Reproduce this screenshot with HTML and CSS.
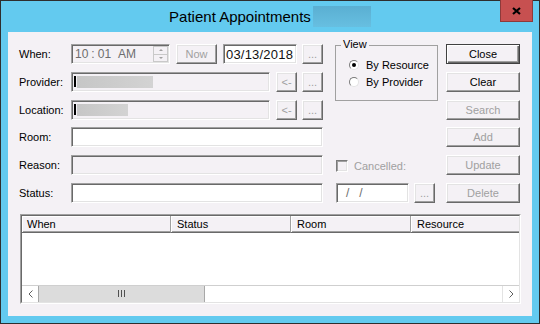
FILE: index.html
```html
<!DOCTYPE html>
<html lang="en">
  <head>
    <meta charset="UTF-8"/>
    <title>Patient Appointments</title>
    <link rel="stylesheet" href="styles.css">
  </head>
  <body>
    <div class="window">
      <div class="titlebar">
        <span class="title">Patient Appointments</span><span class="title-redact"></span>
        <button class="close-btn" title="Close">
          <svg width="9" height="8" viewBox="0 0 9 8"><path d="M1 1 L8 7 M8 1 L1 7" stroke="#000" stroke-width="2.2" fill="none"/></svg>
        </button>
      </div>

      <div class="client">
        <div class="top">
          <div class="form">
            <div class="row">
              <label class="lbl">When:</label>
              <div class="field off time">
                <span>10</span><span class="sep">:</span><span>01</span><span class="ampm">AM</span>
                <div class="spin"><div class="spin-up"></div><div class="spin-down"></div></div>
              </div>
              <button class="btn off now">Now</button>
              <div class="field date">03/13/2018</div>
              <button class="btn off dots">...</button>
            </div>
            <div class="row">
              <label class="lbl">Provider:</label>
              <div class="field off wide"><span class="stub"></span><span class="redact" style="width:76px"></span></div>
              <button class="btn off small">&lt;-</button>
              <button class="btn off dots">...</button>
            </div>
            <div class="row">
              <label class="lbl">Location:</label>
              <div class="field off wide"><span class="stub"></span><span class="redact" style="width:51px"></span></div>
              <button class="btn off small">&lt;-</button>
              <button class="btn off dots">...</button>
            </div>
            <div class="row">
              <label class="lbl">Room:</label>
              <input class="field full" type="text">
            </div>
            <div class="row">
              <label class="lbl">Reason:</label>
              <input class="field off full" type="text" disabled>
            </div>
            <div class="row">
              <label class="lbl">Status:</label>
              <input class="field full" type="text">
            </div>
          </div>

          <div class="middle">
            <div class="group">
              <span class="group-title">View</span>
              <div class="radio-row"><span class="radio on"></span>By Resource</div>
              <div class="radio-row"><span class="radio"></span>By Provider</div>
            </div>
            <div class="check-row">
              <span class="check"></span><span class="muted">Cancelled:</span>
            </div>
            <div class="date-row">
              <div class="field cdate">/&nbsp;&nbsp;&nbsp;/</div>
              <button class="btn off dots">...</button>
            </div>
          </div>

          <div class="buttons">
            <button class="btn default">Close</button>
            <button class="btn">Clear</button>
            <button class="btn off">Search</button>
            <button class="btn off">Add</button>
            <button class="btn off">Update</button>
            <button class="btn off">Delete</button>
          </div>
        </div>

        <div class="list">
          <div class="list-inner">
            <div class="lv-head">
              <div class="col" style="width:149px">When</div>
              <div class="col" style="width:120px">Status</div>
              <div class="col" style="width:120px">Room</div>
              <div class="col last">Resource</div>
            </div>
            <div class="lv-body"></div>
            <div class="sb">
              <div class="sb-arrow">
                <svg width="5" height="8" viewBox="0 0 5 8"><polyline points="4.5,0.5 1,4 4.5,7.5" stroke="#606060" fill="none"/></svg>
              </div>
              <div class="sb-thumb">
                <svg width="7" height="7" viewBox="0 0 7 7"><path d="M0.5 0 V7 M3.5 0 V7 M6.5 0 V7" stroke="#505050"/></svg>
              </div>
              <div class="sb-track"></div>
              <div class="sb-arrow right">
                <svg width="5" height="8" viewBox="0 0 5 8"><polyline points="0.5,0.5 4,4 0.5,7.5" stroke="#606060" fill="none"/></svg>
              </div>
            </div>
          </div>
        </div>
      </div>
    </div>
  </body>
</html>
```
FILE: styles.css
```css
body {
  margin: 0;
  font-family: "Liberation Sans", Arial, sans-serif;
  font-size: 11px;
  color: #000;
}

.window {
  width: 540px;
  height: 324px;
  box-sizing: border-box;
  border: 1px solid #2e2e2e;
  background-color: #63caef;
  position: relative;
}

.titlebar {
  height: 31px;
  display: flex;
  justify-content: center;
  align-items: center;
}

.title {
  font-size: 15px;
}

.title-redact {
  width: 58px;
  height: 21px;
  margin-left: 2px;
  background: linear-gradient(#5aafd2, #67bfe1);
}

.close-btn {
  position: absolute;
  top: -1px;
  right: 6px;
  width: 33px;
  height: 22px;
  box-sizing: border-box;
  padding: 0;
  border: 1px solid #8e3a3a;
  border-top: none;
  background-color: #c75050;
  display: flex;
  align-items: center;
  justify-content: center;
}

.client {
  margin: 0 7px;
  height: 284px;
  box-sizing: border-box;
  padding: 12px 0 0 11px;
  background-color: #f4f1f5;
}

.top {
  display: flex;
}

.form,
.middle,
.buttons {
  display: grid;
  grid-template-rows: repeat(6, 20px);
  row-gap: 7.8px;
}

.form {
  width: 304px;
}

.row {
  display: flex;
  align-items: center;
}

.lbl {
  width: 52px;
  flex: none;
}

/* sunken edit box */
.field {
  box-sizing: border-box;
  height: 20px;
  margin: 0;
  padding: 0 0 0 2px;
  border: 1px solid;
  border-color: #a0a0a0 #fff #fff #a0a0a0;
  box-shadow: inset 1px 1px #696969, inset -1px -1px #e3e3e3;
  background-color: #fff;
  display: flex;
  align-items: center;
  font: inherit;
  outline: none;
}

.field.off {
  background-color: #f4f1f5;
}

.time {
  width: 99px;
  font-size: 12px;
  color: #6d6d6d;
  padding-left: 3px;
}

.time .sep {
  margin: 0 3px;
}

.time .ampm {
  margin-left: 7px;
}

.spin {
  margin-left: auto;
  margin-right: 1px;
  width: 15px;
  height: 16px;
  display: flex;
  flex-direction: column;
}

.spin-up,
.spin-down {
  flex: 1;
  box-sizing: border-box;
  border: 1px solid #c9c9c9;
  display: flex;
  align-items: center;
  justify-content: center;
}

.spin-down {
  border-top: none;
}

.spin-up::after,
.spin-down::after {
  content: "";
  border-left: 2.5px solid transparent;
  border-right: 2.5px solid transparent;
}

.spin-up::after {
  border-bottom: 2px solid #a0a0a0;
}

.spin-down::after {
  border-top: 2px solid #a0a0a0;
}

.date {
  width: 74px;
  margin-left: 6px;
  font-size: 13px;
  letter-spacing: 0.2px;
  color: #111;
}

.wide {
  width: 199px;
}

.full {
  width: 252px;
}

.stub {
  width: 2px;
  height: 11px;
  background-color: #000;
}

.redact {
  height: 12px;
  margin-left: 1px;
  background: linear-gradient(90deg, #c6c6c6, #d3d3d3);
}

/* raised push button */
.btn {
  box-sizing: border-box;
  height: 20px;
  margin: 0;
  padding: 0;
  border: 1px solid;
  border-color: #fff #696969 #696969 #fff;
  box-shadow: inset -1px -1px #a0a0a0, inset 1px 1px #e3e3e3;
  background-color: #f4f1f5;
  font: inherit;
  color: #000;
  display: flex;
  align-items: center;
  justify-content: center;
}

.btn.off {
  color: #a0a0a0;
}

.btn.default {
  border-color: #404040;
  box-shadow: inset 1px 1px #fff, inset -1px -1px #696969, inset -2px -2px #a0a0a0;
}

.now {
  width: 41px;
  margin-left: 6px;
}

.small {
  width: 21px;
  margin-left: 6px;
}

.dots {
  width: 21px;
  margin-left: 5px;
}

.middle {
  width: 103px;
  margin-left: 12px;
}

.group {
  grid-row: 1 / 4;
  align-self: start;
  margin-top: 1px;
  height: 56px;
  box-sizing: border-box;
  border: 1px solid #a0a0a0;
  padding: 10px 0 0 13px;
  position: relative;
}

.group-title {
  position: absolute;
  top: -8px;
  left: 5px;
  padding: 0 2px;
  background-color: #f4f1f5;
}

.radio-row {
  height: 17px;
  display: flex;
  align-items: center;
}

.radio {
  width: 10px;
  height: 10px;
  box-sizing: border-box;
  border-radius: 50%;
  border: 1px solid;
  border-color: #7a7a7a #e3e3e3 #e3e3e3 #7a7a7a;
  background-color: #fff;
  margin-right: 7px;
  position: relative;
}

.radio.on::after {
  content: "";
  position: absolute;
  left: 2px;
  top: 2px;
  width: 4px;
  height: 4px;
  border-radius: 50%;
  background-color: #000;
}

.check-row {
  grid-row: 5;
  display: flex;
  align-items: center;
  padding-top: 2px;
}

.check {
  width: 12px;
  height: 12px;
  box-sizing: border-box;
  margin: 0 6px 0 1px;
  border: 1px solid;
  border-color: #7a7a7a #fff #fff #7a7a7a;
  box-shadow: inset 1px 1px #a0a0a0, inset -1px -1px #e3e3e3;
}

.muted {
  color: #a0a0a0;
}

.date-row {
  grid-row: 6;
  display: flex;
  align-items: center;
}

.cdate {
  width: 73px;
  margin-left: 1px;
  padding-left: 9px;
  font-size: 12px;
  color: #6d6d6d;
}

.buttons {
  width: 74px;
  margin-left: 8px;
}

/* list view */
.list {
  margin: 11px 0 0 1px;
  width: 501px;
  height: 90px;
  box-sizing: border-box;
  border: 1px solid;
  border-color: #a0a0a0 #fff #fff #a0a0a0;
}

.list-inner {
  height: 100%;
  box-sizing: border-box;
  border: 1px solid;
  border-color: #696969 #e3e3e3 #e3e3e3 #696969;
  display: flex;
  flex-direction: column;
  background-color: #fff;
}

.lv-head {
  display: flex;
  height: 17px;
  flex: none;
}

.col {
  box-sizing: border-box;
  padding: 1px 0 0 6px;
  border-right: 1px solid #a0a0a0;
  border-bottom: 1px solid #696969;
  box-shadow: inset 1px 1px #fff, inset 0 -1px #a0a0a0;
  background-color: #f4f1f5;
  display: flex;
  align-items: center;
}

.col:first-child {
  padding-left: 5px;
}

.col.last {
  flex: 1;
  border-right: none;
}

.lv-body {
  flex: 1;
}

.sb {
  height: 17px;
  flex: none;
  box-sizing: border-box;
  border-top: 1px solid #cfcfcf;
  display: flex;
}

.sb-arrow {
  width: 16px;
  display: flex;
  align-items: center;
  justify-content: center;
}

.sb-arrow.right {
  width: 17px;
  border-left: 1px solid #e3e3e3;
  box-sizing: border-box;
}

.sb-thumb {
  width: 167px;
  box-sizing: border-box;
  border: 1px solid #a8a8a8;
  border-top: none;
  border-bottom: none;
  background-color: #dcdcdc;
  display: flex;
  align-items: center;
  justify-content: center;
}

.sb-track {
  flex: 1;
}
```
